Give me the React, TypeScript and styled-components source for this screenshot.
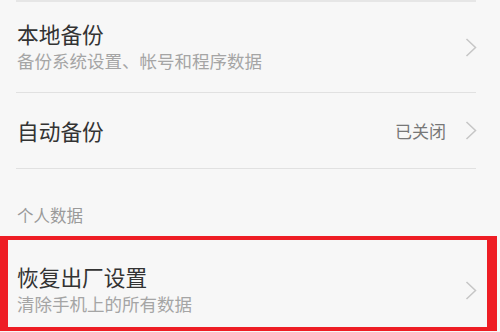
import { FunctionComponent } from "react";
import styled, { createGlobalStyle } from "styled-components";

const GlobalStyle = createGlobalStyle`
  html, body {
    margin: 0;
    padding: 0;
    background: #f7f7f7;
  }
  body {
    font-family: "Noto Sans CJK SC", "Noto Sans", sans-serif;
  }
`;

const Page = styled.div`
  width: 500px;
  height: 332px;
  overflow: hidden;
  background: #f7f7f7;
  display: flex;
  flex-direction: column;
`;

const Divider = styled.div<{ $thick?: boolean }>`
  height: ${(p) => (p.$thick ? 2 : 1)}px;
  margin: 0 24px 0 16px;
  background: ${(p) => (p.$thick ? "#e6e6e6" : "#e1e1e1")};
  flex-shrink: 0;
`;

const Item = styled.div<{ $height: number; $pt?: number; $highlight?: boolean }>`
  box-sizing: border-box;
  height: ${(p) => p.$height}px;
  display: flex;
  flex-direction: row;
  align-items: center;
  flex-shrink: 0;
  padding: ${(p) => p.$pt ?? 0}px 23px 0 17px;
  ${(p) =>
    p.$highlight &&
    `
    width: 497px;
    border-style: solid;
    border-color: #ee1d24;
    border-width: 4px 10px 4px 8px;
    padding: ${p.$pt ?? 0}px 10px 0 9px;
  `}
`;

const TextBlock = styled.div`
  flex: 1;
  display: flex;
  flex-direction: column;
  gap: 1px;
`;

const Title = styled.div`
  font-size: 21.7px;
  line-height: 26px;
  color: #333333;
`;

const Subtitle = styled.div`
  font-size: 17.5px;
  line-height: 25px;
  color: #a5a5a5;
`;

const Value = styled.span`
  font-size: 17px;
  line-height: 24px;
  color: #777777;
  margin-right: 19px;
`;

const SectionHeader = styled.div`
  flex-shrink: 0;
  padding: 35px 17px 10px;
  font-size: 16.5px;
  line-height: 22px;
  color: #9a9a9a;
`;

const ChevronIcon = styled.svg`
  width: 12px;
  height: 19px;
  flex-shrink: 0;
`;

const Chevron: FunctionComponent = () => (
  <ChevronIcon viewBox="0 0 12 19">
    <polyline
      points="1.5,1 10.5,9.5 1.5,18"
      fill="none"
      stroke="#c6c6c6"
      strokeWidth="1.5"
    />
  </ChevronIcon>
);

const App: FunctionComponent = () => {
  return (
    <Page>
      <GlobalStyle />
      <Divider $thick />
      <Item $height={90}>
        <TextBlock>
          <Title>本地备份</Title>
          <Subtitle>备份系统设置、帐号和程序数据</Subtitle>
        </TextBlock>
        <Chevron />
      </Item>
      <Divider />
      <Item $height={75}>
        <TextBlock>
          <Title>自动备份</Title>
        </TextBlock>
        <Value>已关闭</Value>
        <Chevron />
      </Item>
      <Divider />
      <SectionHeader>个人数据</SectionHeader>
      <Item $height={95} $pt={13} $highlight>
        <TextBlock>
          <Title>恢复出厂设置</Title>
          <Subtitle>清除手机上的所有数据</Subtitle>
        </TextBlock>
        <Chevron />
      </Item>
    </Page>
  );
};

export default App;
